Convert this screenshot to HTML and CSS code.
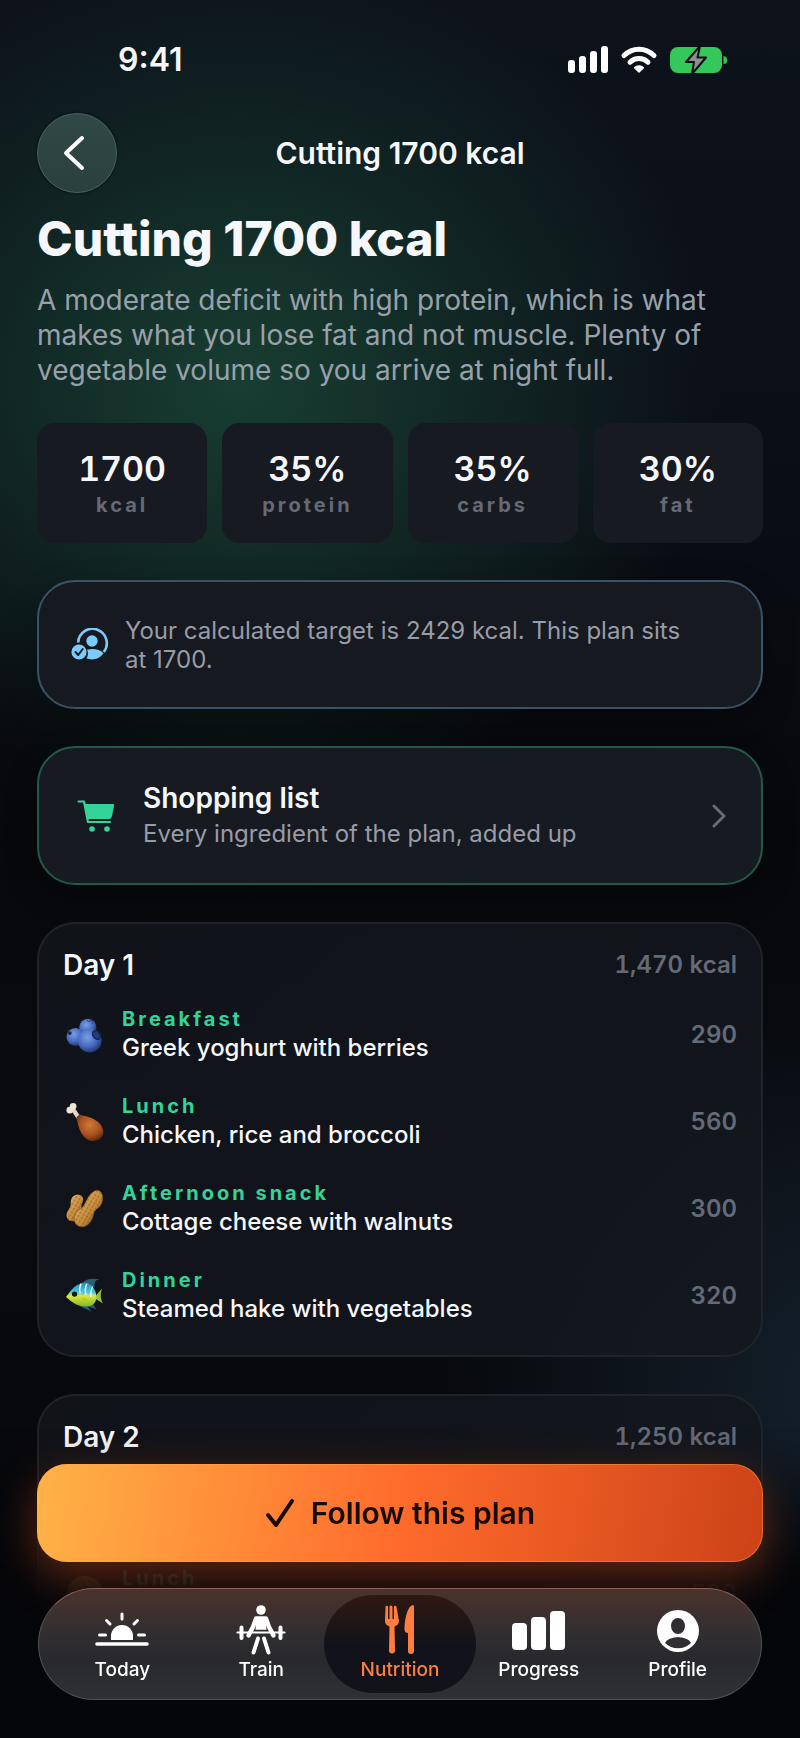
FILE: index.html
```
<!DOCTYPE html>
<html lang="en">
<head>
    <meta charset="UTF-8">
    <meta name="viewport" content="width=device-width, initial-scale=1.0">
    <title>Cutting 1700 kcal</title>
    <link rel="stylesheet" href="styles.css">
</head>
<body>
    <div class="app">
        <!-- Status bar -->
        <div class="status-bar">
            <span class="status-time">9:41</span>
            <div class="status-icons">
                <svg width="40" height="28" viewBox="0 0 40 28" fill="#fff" aria-hidden="true">
                    <rect x="0" y="14" width="7" height="13" rx="3"/>
                    <rect x="11" y="10" width="7" height="17" rx="3"/>
                    <rect x="22" y="5" width="7" height="22" rx="3"/>
                    <rect x="33" y="0" width="7" height="27" rx="3"/>
                </svg>
                <svg width="38" height="28" viewBox="0 0 38 28" fill="none" stroke="#fff" stroke-width="5" stroke-linecap="round" aria-hidden="true">
                    <path d="M4 9.500C12.500 1 25.500 1 34 9.500"/>
                    <path d="M10 16.200C15 11.200 23 11.200 28 16.200"/>
                    <path d="M14.600 21.800C17 19.400 21 19.400 23.400 21.800L19 26Z" fill="#fff" stroke-width="1.500" stroke-linejoin="round"/>
                </svg>
                <svg width="58" height="30" viewBox="0 0 58 30" aria-hidden="true">
                    <rect x="0" y="2" width="52" height="26" rx="8" fill="#34c759"/>
                    <path d="M53.500 11c5 .8 5 8 0 8z" fill="#34c759"/>
                    <path d="M30 1 16 17h8L22 29 36 12.500H27.500Z" fill="#8e8e93" stroke="#0c0f15" stroke-width="2" stroke-linejoin="round"/>
                </svg>
            </div>
        </div>

        <!-- Navigation -->
        <header class="nav-bar">
            <button class="back-button" type="button" aria-label="Back">
                <svg width="24" height="36" viewBox="0 0 24 36" fill="none" stroke="#fff" stroke-width="4" stroke-linecap="round" stroke-linejoin="round"><path d="M20 3 4 18l16 15"/></svg>
            </button>
            <span class="nav-title">Cutting 1700 kcal</span>
        </header>

        <main class="content">
            <h1 class="plan-title">Cutting 1700 kcal</h1>
            <p class="plan-text">A moderate deficit with high protein, which is what makes what you lose fat and not muscle. Plenty of vegetable volume so you arrive at night full.</p>

            <div class="stats">
                <div class="stat-item">
                    <div class="stat-value">1700</div>
                    <div class="stat-label">kcal</div>
                </div>
                <div class="stat-item">
                    <div class="stat-value">35%</div>
                    <div class="stat-label">protein</div>
                </div>
                <div class="stat-item">
                    <div class="stat-value">35%</div>
                    <div class="stat-label">carbs</div>
                </div>
                <div class="stat-item">
                    <div class="stat-value">30%</div>
                    <div class="stat-label">fat</div>
                </div>
            </div>

            <section class="card target-card">
                <svg width="38" height="34" viewBox="0 0 38 34" fill="#7dcbfa" aria-hidden="true">
                    <path d="M7.200 14.500a14.300 14.300 0 1 1 25.500 9.500" fill="none" stroke="#7dcbfa" stroke-width="2.600"/>
                    <circle cx="21" cy="13" r="5.700"/>
                    <path d="M16 21.800c5-1.500 13-.8 16.500 3.500C28 32 20 32.500 15.500 30.300c1.800-2.600 2-5.800.5-8.500z"/>
                    <circle cx="8" cy="24" r="7.600"/>
                    <path d="m4.500 24 2.700 3 4.500-6" fill="none" stroke="#161920" stroke-width="2" stroke-linecap="round" stroke-linejoin="round"/>
                </svg>
                <p class="target-text">Your calculated target is 2429 kcal. This plan sits at 1700.</p>
            </section>

            <a class="card shopping-card" href="#shopping">
                <svg width="38" height="34" viewBox="0 0 38 34" fill="none" stroke="#34d399" stroke-width="2.200" stroke-linecap="round" stroke-linejoin="round" aria-hidden="true">
                    <path d="M1.500 2.500h5.500l4 20.500h22"/>
                    <path d="M8.500 6H36l-2 10.500q-.5 2.500-3 2.500H11Z" fill="#34d399"/>
                    <circle cx="15" cy="30" r="1.700" fill="#34d399"/>
                    <circle cx="30" cy="30" r="1.700" fill="#34d399"/>
                </svg>
                <span class="shopping-info">
                    <span class="shopping-title">Shopping list</span>
                    <span class="shopping-text">Every ingredient of the plan, added up</span>
                </span>
                <svg width="14" height="24" viewBox="0 0 14 24" fill="none" stroke="#666a78" stroke-width="3" stroke-linecap="round" stroke-linejoin="round" aria-hidden="true"><path d="m2 2 10 10L2 22"/></svg>
            </a>

            <section class="card day-card">
                <div class="day-header">
                    <h2 class="day-title">Day 1</h2>
                    <span class="day-total">1,470 kcal</span>
                </div>
                <ul class="meals">
                    <li class="meal">
                        <svg class="meal-icon" viewBox="0 0 40 40" aria-hidden="true">
                            <defs>
                                <radialGradient id="berry" cx=".4" cy=".35" r=".7"><stop offset="0" stop-color="#7a9fe4"/><stop offset=".6" stop-color="#4468bd"/><stop offset="1" stop-color="#1c2e69"/></radialGradient>
                            </defs>
                            <circle cx="23" cy="12" r="9" fill="url(#berry)"/>
                            <path d="m22 4 2 2 3-2 1 4" fill="none" stroke="#253c82"/>
                            <circle cx="10" cy="22" r="9.500" fill="url(#berry)"/>
                            <circle cx="4" cy="18" r="2" fill="#172451"/>
                            <circle cx="25" cy="26" r="12.500" fill="url(#berry)"/>
                            <ellipse cx="32" cy="20" rx="3.500" ry="5" fill="#253b7f" stroke="#162450" stroke-width="1.500" transform="rotate(-35 32 20)"/>
                        </svg>
                        <div class="meal-info">
                            <div class="meal-type">Breakfast</div>
                            <div class="meal-name">Greek yoghurt with berries</div>
                        </div>
                        <span class="meal-kcal">290</span>
                    </li>
                    <li class="meal">
                        <svg class="meal-icon" viewBox="0 0 40 40" aria-hidden="true">
                            <defs>
                                <radialGradient id="leg" cx=".5" cy=".4" r=".65"><stop offset="0" stop-color="#d07a3a"/><stop offset=".6" stop-color="#a7501f"/><stop offset="1" stop-color="#5c2510"/></radialGradient>
                            </defs>
                            <path d="m7 6 6 9" stroke="#e3d6c6" stroke-width="4.500" stroke-linecap="round"/>
                            <circle cx="4" cy="7.500" r="3.500" fill="#eee4d8"/>
                            <circle cx="7.500" cy="3.500" r="3.500" fill="#eee4d8"/>
                            <path d="M14 12c7 2 22 4 25 16 2 8-5 12-12 12-9-1-14-12-16-25Z" fill="url(#leg)"/>
                        </svg>
                        <div class="meal-info">
                            <div class="meal-type">Lunch</div>
                            <div class="meal-name">Chicken, rice and broccoli</div>
                        </div>
                        <span class="meal-kcal">560</span>
                    </li>
                    <li class="meal">
                        <svg class="meal-icon" viewBox="0 0 40 40" aria-hidden="true">
                            <defs>
                                <linearGradient id="shell" x1="0" y1="0" x2="1" y2="1"><stop offset="0" stop-color="#edbd72"/><stop offset=".55" stop-color="#c8903f"/><stop offset="1" stop-color="#714317"/></linearGradient>
                                <pattern id="ridges" width="4" height="4" patternUnits="userSpaceOnUse" patternTransform="rotate(30)"><path d="M1 0v2.500" stroke="#8a5722" stroke-width="1"/></pattern>
                            </defs>
                            <path d="M11 5c6-1 9 4 6 9-2 4 1 6-1 12-2 7-12 10-15 3-2-6 4-9 4-14 0-5 1-9 6-10Z" fill="url(#shell)"/>
                            <path d="M11 5c6-1 9 4 6 9-2 4 1 6-1 12-2 7-12 10-15 3-2-6 4-9 4-14 0-5 1-9 6-10Z" fill="url(#ridges)"/>
                            <path d="M30 1c7-3 10 5 8 12-3 8-8 6-9 13-2 9-9 15-16 12-7-4-5-14 2-18 6-3 6-14 15-19Z" fill="url(#shell)" stroke="#74481c" stroke-width=".5"/>
                            <path d="M30 1c7-3 10 5 8 12-3 8-8 6-9 13-2 9-9 15-16 12-7-4-5-14 2-18 6-3 6-14 15-19Z" fill="url(#ridges)"/>
                        </svg>
                        <div class="meal-info">
                            <div class="meal-type">Afternoon snack</div>
                            <div class="meal-name">Cottage cheese with walnuts</div>
                        </div>
                        <span class="meal-kcal">300</span>
                    </li>
                    <li class="meal">
                        <svg class="meal-icon" viewBox="0 0 40 40" aria-hidden="true">
                            <defs>
                                <linearGradient id="fish" x1="0" y1="0" x2="0" y2="1"><stop offset="0" stop-color="#168fc4"/><stop offset=".42" stop-color="#59c9d8"/><stop offset=".55" stop-color="#d9ea3e"/><stop offset="1" stop-color="#87b622"/></linearGradient>
                            </defs>
                            <path d="M17 6C22 1 29 1 36 3c-5-1-6 2-6 8ZM13 29c3 4 8 4 14 8l-4-6 9 3-5-8Z" fill="#285e70"/>
                            <path d="m31 20 7-8c-2 6-2 10 1 16l-8-5Z" fill="#9bc139"/>
                            <path d="M0 21C6 13 11 6 20 6c7 0 12 8 12 15 0 5-3 10-11 10C12 31 7 27 0 21Z" fill="url(#fish)"/>
                            <path d="M16 7c-2 4-2 7-1 10M22 7c-2 4-2 8-1 12M28 10c-2 4-2 6-2 11" fill="none" stroke="#e9fbff" stroke-width="1.500"/>
                            <circle cx="9" cy="18" r="2.800" fill="#161b16"/>
                            <path d="m17 22 4 2-4 2" fill="none" stroke="#b8ca25" stroke-width="1.500"/>
                        </svg>
                        <div class="meal-info">
                            <div class="meal-type">Dinner</div>
                            <div class="meal-name">Steamed hake with vegetables</div>
                        </div>
                        <span class="meal-kcal">320</span>
                    </li>
                </ul>
            </section>

            <section class="card day-card">
                <div class="day-header">
                    <h2 class="day-title">Day 2</h2>
                    <span class="day-total">1,250 kcal</span>
                </div>
                <ul class="meals">
                    <li class="meal"></li>
                    <li class="meal">
                        <svg class="meal-icon" viewBox="0 0 40 40" aria-hidden="true">
                            <circle cx="20" cy="20" r="19" fill="#a98435"/>
                            <circle cx="20" cy="20" r="15" fill="#79762a"/>
                            <path d="m10 14 5-4 3 4m4-5 5 3-2 4m-13 2 6 1m5-2 7 3" fill="none" stroke="#c1a452" stroke-width="2.500" stroke-linecap="round"/>
                        </svg>
                        <div class="meal-info">
                            <div class="meal-type">Lunch</div>
                            <div class="meal-name"></div>
                        </div>
                        <span class="meal-kcal">520</span>
                    </li>
                </ul>
            </section>
        </main>

        <!-- Bottom actions -->
        <div class="bottom">
            <button class="follow-button" type="button">
                <svg width="30" height="30" viewBox="0 0 30 30" fill="none" stroke="#160b05" stroke-width="4" stroke-linecap="round" stroke-linejoin="round" aria-hidden="true"><path d="m3 17 8 10L27 3"/></svg>
                Follow this plan
            </button>

            <nav class="tab-bar">
                <a class="tab" href="#today">
                    <svg width="54" height="52" viewBox="0 0 54 52" fill="none" stroke="#fff" stroke-width="3" stroke-linecap="round" aria-hidden="true">
                        <path d="M2 39h50" stroke-width="3.600"/>
                        <path d="M4.500 30h6M43.500 30h6M27 9v5M11.500 15.500l3.500 3.500M42.500 15.500l-3.500 3.500"/>
                        <path d="M16 35v-4a11 11 0 0 1 22 0v4z" fill="#fff" stroke="none"/>
                    </svg>
                    Today
                </a>
                <a class="tab" href="#train">
                    <svg width="54" height="52" viewBox="0 0 54 52" fill="#fff" aria-hidden="true">
                        <circle cx="27" cy="5" r="4.800"/>
                        <path d="M22.500 11.200h9l1 13.500h-11z"/>
                        <path d="M22 13.500q-2.500 9-7.500 17M32 13.500q2.500 9 7.500 17" fill="none" stroke="#fff" stroke-width="4.400" stroke-linecap="round"/>
                        <path d="M3.500 27.500h47" fill="none" stroke="#fff" stroke-width="2.200" stroke-linecap="round"/>
                        <path d="M7.500 22.500v10.500M46.500 22.500v10.500" fill="none" stroke="#fff" stroke-width="4" stroke-linecap="round"/>
                        <path d="M24 33.500l-4.500 14M30 33.500l4.500 14" fill="none" stroke="#fff" stroke-width="4" stroke-linecap="round"/>
                    </svg>
                    Train
                </a>
                <a class="tab active" href="#nutrition" aria-current="page">
                    <svg width="54" height="52" viewBox="0 0 54 52" fill="#ff7d3f" aria-hidden="true">
                        <path d="M12.500 2a1.300 1.300 0 0 1 2.600 0v12h1.400V2a1.500 1.500 0 0 1 3 0v12h1.400V2a1.300 1.300 0 0 1 2.600 0l2.500 14q0 4-4.500 5.500l.5 24a3 3 0 0 1-6 0l.5-24q-4.500-1.500-4.500-5.500z"/>
                        <path d="M41 2v44a3 3 0 0 1-6 0V28q-4 0-3.500-5C32 11 35 1 40 0q1 0 1 2z"/>
                    </svg>
                    Nutrition
                </a>
                <a class="tab" href="#progress">
                    <svg width="54" height="52" viewBox="0 0 54 52" fill="#fff" aria-hidden="true">
                        <rect x="0" y="18" width="15" height="27" rx="4"/>
                        <rect x="19" y="12" width="15" height="33" rx="4"/>
                        <rect x="38" y="6" width="15" height="39" rx="4"/>
                    </svg>
                    Progress
                </a>
                <a class="tab" href="#profile">
                    <svg width="54" height="52" viewBox="0 0 54 52" aria-hidden="true">
                        <circle cx="27" cy="26" r="21" fill="#fff"/>
                        <ellipse cx="27" cy="21" rx="7" ry="8" fill="#312e31"/>
                        <path d="M14 38q2-5 13-6 11 1 13 6c-7 7-19 7-26 0z" fill="#312e31"/>
                    </svg>
                    Profile
                </a>
            </nav>
        </div>
    </div>
</body>
</html>
```
FILE: styles.css
```
* {
    margin: 0;
    padding: 0;
    box-sizing: border-box;
}

body {
    font-family: Inter, "Liberation Sans", sans-serif;
    background: #07080c;
    color: #f5f7fb;
    height: 100vh;
    overflow: hidden;
}

a {
    color: inherit;
    text-decoration: none;
}

svg {
    flex-shrink: 0;
}

.app {
    height: 100vh;
    display: flex;
    flex-direction: column;
    overflow: hidden;
    background:
        radial-gradient(ellipse 60% 24% at 30% 22%, rgba(24, 62, 50, 1), rgba(20, 52, 43, 0.7) 45%, rgba(12, 24, 24, 0) 100%),
        radial-gradient(ellipse 55% 22% at 110% 80%, #15222d, rgba(13, 20, 27, 0) 100%),
        linear-gradient(#0d131b, #0b0e17 25%, #07080b 48%, #090b10 65%, #05060a);
}

/* Status bar */
.status-bar {
    display: flex;
    justify-content: space-between;
    align-items: center;
    height: 113px;
    padding: 6px 72px 0 118px;
}

.status-time {
    font-size: 32px;
    font-weight: 600;
}

.status-icons {
    display: flex;
    align-items: center;
    gap: 12px;
}

/* Navigation */
.nav-bar {
    display: grid;
    grid-template-columns: 80px 1fr 80px;
    align-items: center;
    padding: 0 37px;
}

.back-button {
    display: flex;
    align-items: center;
    justify-content: center;
    width: 80px;
    height: 80px;
    padding-right: 6px;
    border: 1px solid #4a625f;
    border-radius: 50%;
    background: linear-gradient(#304846, #2a403e);
    box-shadow: 0 0 2px 1px rgba(0, 0, 0, 0.4);
    cursor: pointer;
}

.nav-title {
    text-align: center;
    font-size: 30px;
    font-weight: 600;
}

/* Plan */
.content {
    flex: 1;
    min-height: 0;
    overflow: hidden;
    padding: 17px 37px 0;
}

.plan-title {
    font-size: 48px;
    font-weight: 800;
    line-height: 58px;
    margin-bottom: 15px;
}

.plan-text {
    font-size: 28px;
    line-height: 35px;
    color: #98a1ab;
    margin-bottom: 35px;
}

.stats {
    display: grid;
    grid-template-columns: repeat(4, 1fr);
    gap: 15px;
    margin-bottom: 37px;
}

.stat-item {
    height: 120px;
    padding-top: 25px;
    text-align: center;
    background: #171a21;
    border-radius: 18px;
}

.stat-value {
    font-size: 34px;
    font-weight: 600;
    line-height: 42px;
    font-variant-numeric: tabular-nums;
}

.stat-label {
    font-size: 20px;
    font-weight: 700;
    line-height: 30px;
    letter-spacing: 3px;
    color: #656a76;
}

/* Cards */
.card {
    border: 2px solid #20242a;
    border-radius: 38px;
    margin-bottom: 37px;
}

.target-card {
    display: flex;
    align-items: center;
    gap: 16px;
    min-height: 129px;
    padding: 0 64px 0 32px;
    border-color: #3a5265;
    background: #161920;
    box-shadow: 0 12px 32px rgba(0, 0, 0, 0.3);
}

.target-text {
    font-size: 24px;
    line-height: 29px;
    color: #989ca8;
}

.shopping-card {
    display: flex;
    align-items: center;
    gap: 28px;
    min-height: 139px;
    padding: 0 35px 0 38px;
    border-color: #23594a;
    background: linear-gradient(100deg, #171a21, #151b20);
    box-shadow: 0 12px 32px rgba(0, 0, 0, 0.3);
}

.shopping-info {
    flex: 1;
    display: flex;
    flex-direction: column;
}

.shopping-title {
    font-size: 28px;
    font-weight: 600;
    line-height: 36px;
}

.shopping-text {
    font-size: 24px;
    line-height: 35px;
    color: #989ca8;
}

.day-card {
    padding: 20px 24px 16px;
    background: linear-gradient(135deg, rgba(17, 20, 26, 0.9), rgba(20, 24, 31, 0.8));
}

.day-header {
    display: flex;
    justify-content: space-between;
    align-items: center;
    line-height: 42px;
    margin-bottom: 5px;
}

.day-title {
    font-size: 28px;
    font-weight: 600;
}

.day-total,
.meal-kcal {
    font-size: 24px;
    font-weight: 600;
    font-variant-numeric: tabular-nums;
    color: #656a79;
}

.meals {
    list-style: none;
}

.meal {
    display: flex;
    align-items: center;
    height: 87px;
}

.meal-icon {
    width: 38px;
    height: 38px;
    margin: 0 18px 0 3px;
}

.meal-info {
    flex: 1;
}

.meal-type {
    font-size: 20px;
    font-weight: 700;
    line-height: 27px;
    letter-spacing: 3px;
    color: #34d399;
}

.meal-name {
    font-size: 24px;
    font-weight: 500;
    line-height: 30px;
    min-height: 30px;
}

/* Bottom actions */
.bottom {
    position: fixed;
    left: 0;
    right: 0;
    bottom: 0;
    padding: 36px 37px 38px;
    background: linear-gradient(rgba(5, 6, 10, 0), rgba(5, 6, 10, 0.1) 12%, rgba(5, 6, 10, 0.88) 45%, #05060a 60%);
}

.follow-button {
    display: flex;
    align-items: center;
    justify-content: center;
    gap: 16px;
    width: 100%;
    height: 98px;
    margin-bottom: 26px;
    border: 0;
    border-radius: 30px;
    background: linear-gradient(100deg, #ffb347, #ff6b2c 50%, #cc4217);
    box-shadow: 0 14px 44px rgba(255, 94, 31, 0.36), inset 0 0 0 1px rgba(255, 170, 90, 0.4);
    color: #160b05;
    font-family: inherit;
    font-size: 30px;
    font-weight: 600;
    cursor: pointer;
}

.tab-bar {
    display: grid;
    grid-template-columns: repeat(5, 1fr);
    height: 112px;
    margin: 0 1px;
    padding: 6px 14px;
    border: 1px solid #545255;
    border-top-color: #8a625a;
    border-radius: 56px;
    background: linear-gradient(#4b322c, #312e31 40%, #28292d 65%, #303135);
}

.tab {
    display: flex;
    flex-direction: column;
    align-items: center;
    padding-top: 10px;
    border-radius: 49px;
    font-size: 19px;
    font-weight: 500;
    line-height: 26px;
    color: #fff;
}

.tab.active {
    margin: 0 -7px;
    background: linear-gradient(#301811, #12131a 50%);
    color: #ff7d3f;
}
```
